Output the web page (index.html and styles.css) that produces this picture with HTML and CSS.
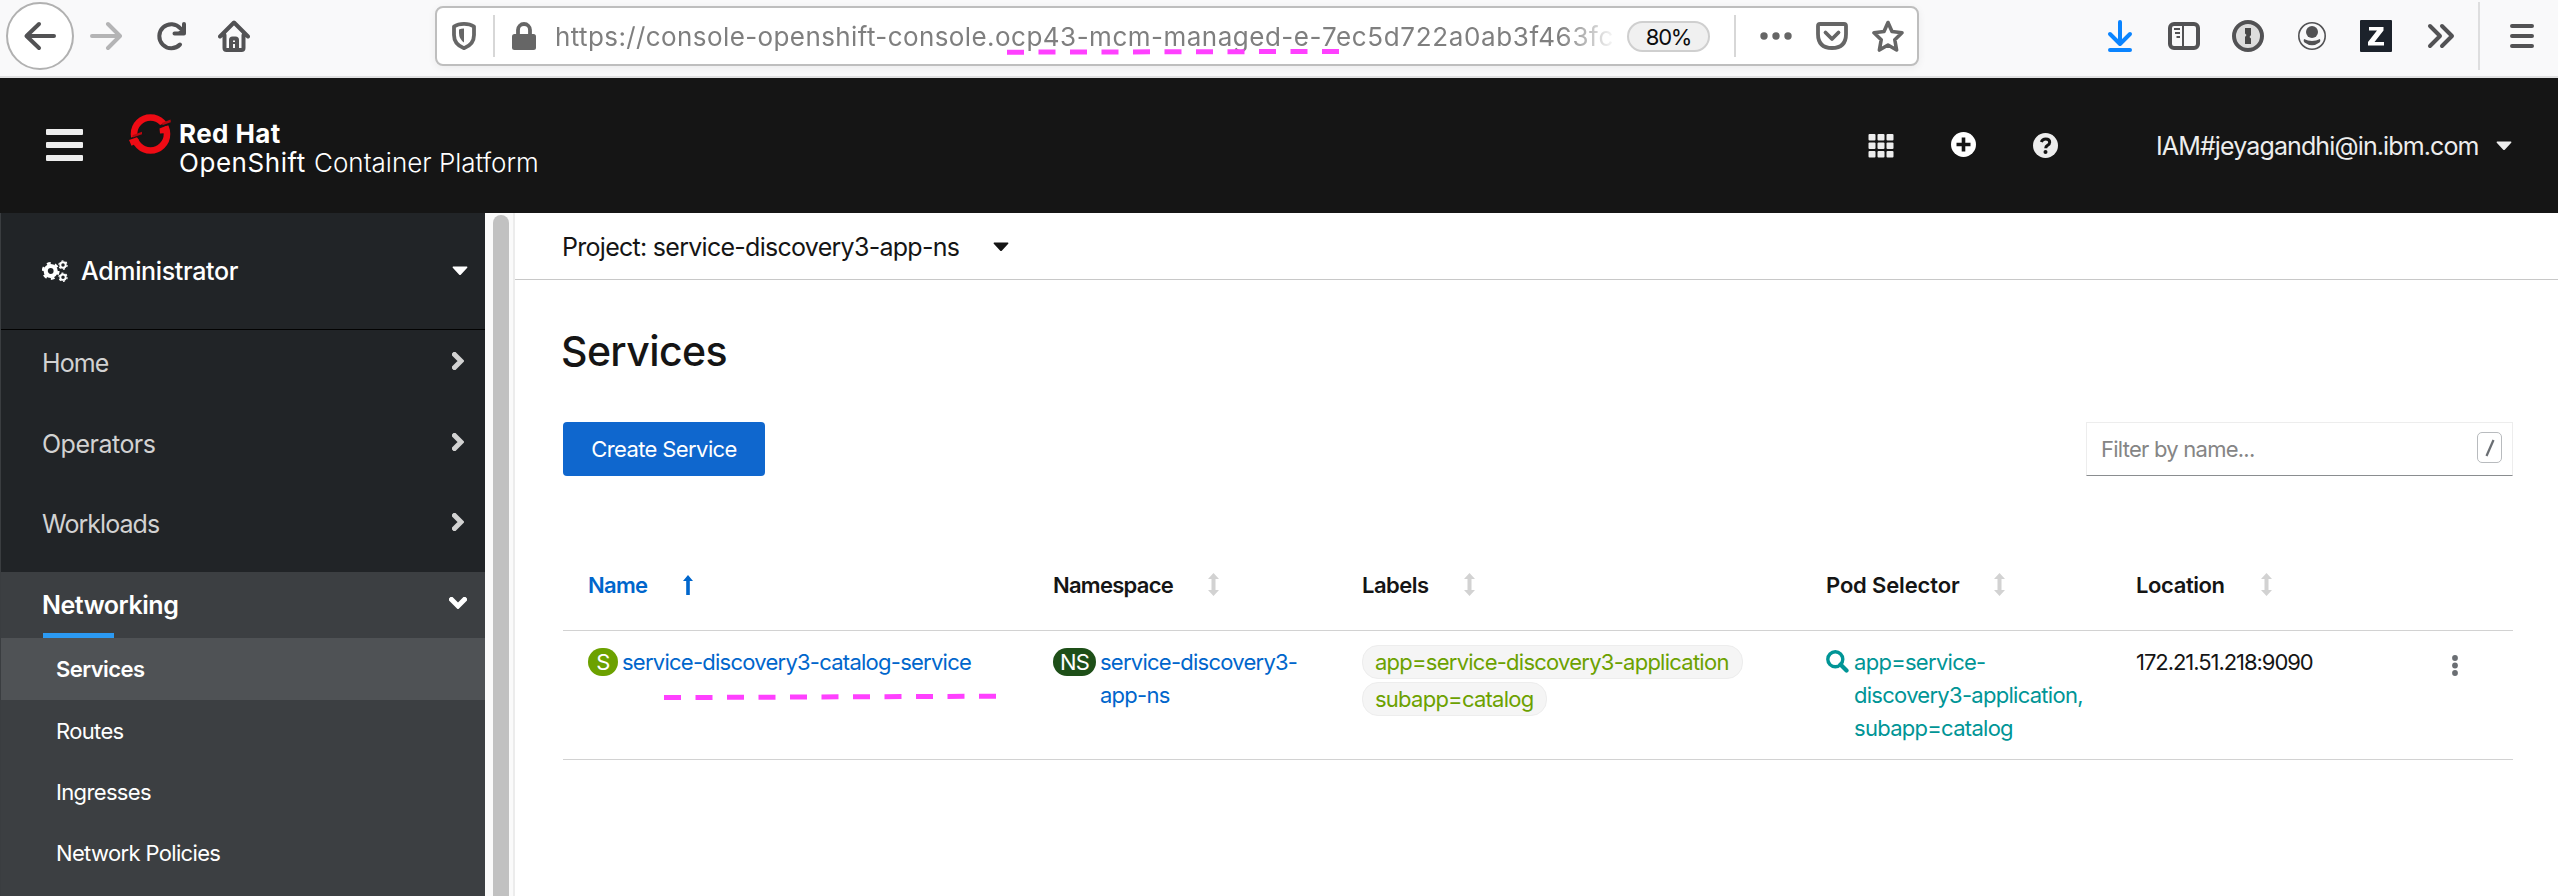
FILE: index.html
```html
<!DOCTYPE html>
<html lang="en">
<head>
<meta charset="utf-8">
<title>Services · Red Hat OpenShift Container Platform</title>
<link rel="stylesheet" href="styles.css">
</head>
<body>
<div class="toolbar">
  <div class="back"><svg width="34" height="32" viewBox="0 0 34 32" class="stroke"><path d="M16 4 3.500 16 16 28M4 16H31"/></svg></div>
  <svg class="forward stroke" width="32" height="32" viewBox="0 0 32 32"><path d="M18 4 30 16 18 28M2 16H29"/></svg>
  <svg class="reload stroke" width="32" height="32" viewBox="0 0 32 32"><path d="M25 24.500A12 12 0 1 1 25.500 8.500M29 4V13.500H19.500"/><path class="fill" d="M22 13 29 7V14H22Z" stroke="none"/></svg>
  <svg class="home stroke" width="32" height="32" viewBox="0 0 32 32"><path d="M2 16.500 16 2.500 30 16.500M6.500 15V28Q6.500 30 8.500 30H23.500Q25.500 30 25.500 28V15M13 29V20Q13 18.500 14.500 18.500H17.500Q19 18.500 19 20V29"/><rect class="fill" x="15" y="22" width="2" height="2" stroke="none"/></svg>
  <div class="urlbar">
    <svg width="32" height="32" viewBox="0 0 32 32"><path d="M16 3.800Q22 3.800 26 6.500V15Q26 24.500 16 28.200Q6 24.500 6 15V6.500Q10 3.800 16 3.800Z" fill="none" stroke="#666" stroke-width="3.800" stroke-linejoin="round"/><path d="M16 8.500V22.500Q11 19 11 13V9.500Q13 8.500 16 8.500Z" fill="#666"/></svg>
    <span class="sep"></span>
    <svg width="32" height="32" viewBox="0 0 32 32"><path d="M10 15V10a6 6 0 0 1 12 0V15" fill="none" stroke="#666" stroke-width="3.800"/><rect x="4" y="14" width="24" height="16" rx="2.500" fill="#666"/></svg>
    <div class="url"><span class="u1">https://console-openshift-console.</span><span class="u2">ocp43-mcm-managed-e-</span><span class="u3">7ec5d722a0ab3f463fc</span>
    </div>
    <span class="pill">80%</span>
    <span class="sep sep-b"></span>
    <svg width="32" height="32" viewBox="0 0 32 32" fill="#666"><circle cx="4" cy="16" r="3.700"/><circle cx="16" cy="16" r="3.700"/><circle cx="28" cy="16" r="3.700"/></svg>
    <svg width="32" height="32" viewBox="0 0 32 32" fill="none" stroke="#666" stroke-width="3.800" stroke-linecap="round" stroke-linejoin="round"><path d="M4 4H28Q30 4 30 6V14Q30 28 16 28T2 14V6Q2 4 4 4Z"/><path d="M9.500 12.500 16 19 22.500 12.500"/></svg>
    <svg width="32" height="32" viewBox="0 0 32 32" fill="none" stroke="#666" stroke-width="3.600" stroke-linejoin="round"><path d="M16 2.500 20 11.500 30 12.800 22.800 19.800 24.600 30 16 25 7.400 30 9.200 19.800 2 12.800 12 11.500Z"/></svg>
    <svg class="dash url-dash" width="334" height="6" viewBox="0 0 334 6"><path d="M0 3.200 334 2.400"/></svg>
  </div>
  <div class="tools">
    <svg width="32" height="32" viewBox="0 0 32 32" fill="none" stroke="#0a84ff" stroke-width="4" stroke-linecap="round" stroke-linejoin="round"><path d="M16 2V23M6 14 16 24 26 14M6 30H26"/></svg>
    <svg width="32" height="32" viewBox="0 0 32 32" fill="none" stroke="#525254"><rect x="2" y="4" width="28" height="24" rx="4" stroke-width="4"/><path d="M15 4V28M6 9H12M7 13H12M8.500 17H12" stroke-width="2"/></svg>
    <svg width="32" height="32" viewBox="0 0 32 32"><circle cx="16" cy="16" r="14" fill="#ddd" stroke="#525254" stroke-width="4"/><path d="M13 8H19V15L17.500 17 19 18.500V24H13V17L14.500 15 13 13.500Z" fill="#484848"/></svg>
    <svg width="32" height="32" viewBox="0 0 32 32" fill="#525254"><circle cx="16" cy="16" r="13.200" fill="none" stroke="#525254" stroke-width="1.600"/><circle cx="16" cy="12" r="6"/><path d="M8 19Q16 23 24 19Q25 21 23.500 22.500Q16 28 8.500 22.500Q7 21 8 19Z"/></svg>
    <svg width="32" height="32" viewBox="0 0 32 32"><rect width="32" height="32" rx="1" fill="#1c222b"/><path d="M9 7H23.500V10.500L14.500 22H24V25.500H8V22L17 10.500H9Z" fill="#fff"/></svg>
    <svg width="32" height="32" viewBox="0 0 32 32" class="stroke"><path d="M6 6 16 16 6 26M18 6 28 16 18 26"/></svg>
  </div>
  <span class="tool-sep"></span>
  <svg class="menu stroke" width="32" height="32" viewBox="0 0 32 32"><path d="M6 6H26M6 16H26M6 26H26"/></svg>
</div>

<header class="masthead">
  <div class="burger"><i></i><i></i><i></i></div>
  <div class="brand">
    <svg width="42" height="42" viewBox="0 0 42 42"><circle cx="21.500" cy="21" r="16.500" fill="none" stroke="#ee0b14" stroke-width="6.600"/><path d="M0 25.500 17 18.500V21.500L0 30ZM25 14.500 42 7.500V11L26.500 18Z" fill="#151515"/><path d="M3.500 22.200 13 18.800 13 21.200 3.800 24.500ZM33 10 41.500 6.500 41.800 9.200 33.500 12.300Z" fill="#b8070f"/><path d="M0 27 8 24.200 9.500 26.500 10 29.300 2.500 32.800ZM30.500 15.500 37.500 12.800 38.500 20 31 20.500Z" fill="#ee0b14"/></svg>
    <div class="brand-text"><div class="b1">Red Hat</div><div class="b2"><span class="os">OpenShift</span><span class="cp">Container Platform</span></div></div>
  </div>
  <div class="mast-tools">
    <svg width="26" height="24" viewBox="0 0 26 24" fill="#ededed"><rect x="0.500" width="7" height="6.500" rx="1"/><rect x="9.500" width="7" height="6.500" rx="1"/><rect x="18.500" width="7" height="6.500" rx="1"/><rect x="0.500" y="8.500" width="7" height="6.500" rx="1"/><rect x="9.500" y="8.500" width="7" height="6.500" rx="1"/><rect x="18.500" y="8.500" width="7" height="6.500" rx="1"/><rect x="0.500" y="17" width="7" height="6.500" rx="1"/><rect x="9.500" y="17" width="7" height="6.500" rx="1"/><rect x="18.500" y="17" width="7" height="6.500" rx="1"/></svg>
    <svg class="plus" width="25" height="25" viewBox="0 0 25 25"><circle cx="12.500" cy="12.500" r="12.500" fill="#fff"/><path d="M12.500 5.500V19.500M5.500 12.500H19.500" stroke="#151515" stroke-width="3.600"/></svg>
    <svg class="help" width="25" height="25" viewBox="0 0 25 25"><circle cx="12.500" cy="12.500" r="12.500" fill="#ededed"/><path d="M8.300 9Q9.500 6 12.700 6Q16.700 6 16.700 9.300Q16.700 11.200 14.500 12.300Q12.700 13.200 12.700 15.200" fill="none" stroke="#151515" stroke-width="3"/><circle cx="12.500" cy="19" r="2" fill="#151515"/></svg>
    <span class="user">IAM#jeyagandhi@in.ibm.com</span>
    <svg class="caret" width="16" height="10" viewBox="0 0 16 10"><path d="M1 .500H15Q16 1 15 2L9 8.500Q8 9.500 7 8.500L1 2Q0 1 1 .500Z"/></svg>
  </div>
</header>

<div class="page">
  <nav class="sidebar">
    <div class="perspective">
      <svg width="26" height="22" viewBox="0 0 26 22" fill="none" stroke="#fff"><circle cx="8.700" cy="11" r="5" stroke-width="4.200"/><circle cx="8.700" cy="11" r="7.700" stroke-width="2.400" stroke-dasharray="3.800 4.263"/><circle cx="21" cy="5" r="2.700" stroke-width="1.900"/><circle cx="21" cy="5" r="4.100" stroke-width="1.200" stroke-dasharray="2 2.300"/><circle cx="21" cy="17.200" r="2.700" stroke-width="1.900"/><circle cx="21" cy="17.200" r="4.100" stroke-width="1.200" stroke-dasharray="2 2.300"/></svg>
      <span class="admin">Administrator</span>
      <svg class="caret" width="16" height="10" viewBox="0 0 16 10"><path d="M1 .500H15Q16 1 15 2L9 8.500Q8 9.500 7 8.500L1 2Q0 1 1 .500Z"/></svg>
    </div>
    <div class="item"><span class="home-l">Home</span><svg class="chev" width="12" height="18" viewBox="0 0 12 18"><path d="M2.500 2.500 9 9 2.500 15.500"/></svg></div>
    <div class="item"><span class="oper-l">Operators</span><svg class="chev" width="12" height="18" viewBox="0 0 12 18"><path d="M2.500 2.500 9 9 2.500 15.500"/></svg></div>
    <div class="item"><span class="work-l">Workloads</span><svg class="chev" width="12" height="18" viewBox="0 0 12 18"><path d="M2.500 2.500 9 9 2.500 15.500"/></svg></div>
    <div class="group">
      <div class="item open"><span class="net-l">Networking</span><svg class="chev down" width="18" height="12" viewBox="0 0 18 12"><path d="M2.500 2.500 9 9 15.500 2.500"/></svg></div>
      <div class="sub active"><span>Services</span></div>
      <div class="sub">Routes</div>
      <div class="sub">Ingresses</div>
      <div class="sub">Network Policies</div>
    </div>
  </nav>
  <div class="gutter"><div class="thumb"></div></div>
  <main>
    <div class="project"><span>Project: service-discovery3-app-ns</span><svg class="caret" width="16" height="10" viewBox="0 0 16 10"><path d="M1 .500H15Q16 1 15 2L9 8.500Q8 9.500 7 8.500L1 2Q0 1 1 .500Z"/></svg></div>
    <div class="content">
      <h1>Services</h1>
      <div class="actions">
        <div class="create">Create Service</div>
        <div class="filter"><span>Filter by name...</span><b><svg width="10" height="18" viewBox="0 0 10 18"><path d="M8.500 1 1.500 17" stroke="#6a6e73" stroke-width="2.200"/></svg></b></div>
      </div>
      <div class="table">
        <div class="row head">
          <div class="name"><span class="h1t">Name</span><svg width="10" height="20" viewBox="0 0 10 20" fill="#0066cc"><path d="M5 0 10 6H6.800V20H3.200V6H0Z"/></svg></div>
          <div><span class="h2t">Namespace</span><svg class="sort" width="11" height="23" viewBox="0 0 11 23"><path d="M5.500 0 11 6H7.500V17H11L5.500 23 0 17H3.500V6H0Z"/></svg></div>
          <div><span class="h3t">Labels</span><svg class="sort" width="11" height="23" viewBox="0 0 11 23"><path d="M5.500 0 11 6H7.500V17H11L5.500 23 0 17H3.500V6H0Z"/></svg></div>
          <div><span class="h4t">Pod Selector</span><svg class="sort" width="11" height="23" viewBox="0 0 11 23"><path d="M5.500 0 11 6H7.500V17H11L5.500 23 0 17H3.500V6H0Z"/></svg></div>
          <div><span class="h5t">Location</span><svg class="sort" width="11" height="23" viewBox="0 0 11 23"><path d="M5.500 0 11 6H7.500V17H11L5.500 23 0 17H3.500V6H0Z"/></svg></div>
        </div>
        <div class="row body">
          <div class="cell"><span class="badge s">S</span><a class="link">service-discovery3-catalog-service</a></div>
          <div class="cell"><span class="badge ns">NS</span><a class="link">service-discovery3-<br>app-ns</a></div>
          <div class="labels"><span class="label">app=service-discovery3-application</span><span class="label">subapp=catalog</span></div>
          <div class="cell"><svg class="mag" width="23" height="23" viewBox="0 0 23 23" fill="none" stroke="#009596"><circle cx="9.300" cy="9.300" r="7.500" stroke-width="3.400"/><path d="M14.500 14.500 20.500 20.500" stroke-width="4.200" stroke-linecap="round"/></svg><a class="pod">app=service-<br>discovery3-application,<br>subapp=catalog</a></div>
          <div class="cell"><span class="loc">172.21.51.218:9090</span></div>
          <svg class="kebab" width="6" height="21" viewBox="0 0 6 21" fill="#6a6e73"><circle cx="3" cy="3" r="2.900"/><circle cx="3" cy="10.500" r="2.900"/><circle cx="3" cy="18" r="2.900"/></svg>
          <svg class="dash name-dash" width="334" height="8" viewBox="0 0 334 8"><path d="M0 4.600 334 3.200"/></svg>
        </div>
      </div>
    </div>
  </main>
</div>
</body>
</html>
```
FILE: styles.css
```css
* { box-sizing: border-box; }
body {
  margin: 0;
  width: 2558px;
  height: 896px;
  overflow: hidden;
  background: #fff;
  color: #151515;
  font-family: Inter, "Liberation Sans", sans-serif;
  font-size: 22px;
  white-space: nowrap;
}
svg { display: block; flex: none; }

/* Browser toolbar */
.toolbar {
  display: flex;
  align-items: center;
  height: 78px;
  padding: 0 18px 4px 6px;
  background: #f9f9fa;
  border-bottom: 2px solid #e0e0e1;
}
.stroke { fill: none; stroke: #525254; stroke-width: 4; stroke-linecap: round; stroke-linejoin: round; }
.stroke .fill { fill: #525254; }
.back {
  display: flex;
  align-items: center;
  justify-content: center;
  width: 68px;
  height: 68px;
  border: 2px solid #b1b1b1;
  border-radius: 50%;
  background: #fff;
}
.forward { margin-left: 16px; stroke: #b4b4b5; }
.reload { margin-left: 33px; }
.home { margin-left: 31px; }
.urlbar {
  position: relative;
  display: flex;
  align-items: center;
  width: 1484px;
  height: 60px;
  margin-left: 185px;
  padding-left: 11px;
  background: #fff;
  border: 2px solid #bebebe;
  border-radius: 8px;
  box-shadow: 0 2px 8px rgba(0, 0, 0, .06);
}
.sep { width: 2px; height: 42px; margin: 0 13px; background: #d7d7d7; }
.url {
  width: 1060px;
  margin: 2px 0 0 15px;
  overflow: hidden;
  color: #7f7f7f;
  font-size: 26px;
  line-height: 40px;
  mask-image: linear-gradient(90deg, #000 1005px, transparent 1062px);
}
.u1 { letter-spacing: .4px; }
.u2 { letter-spacing: .5px; }
.u3 { letter-spacing: .65px; }
.pill {
  width: 83px;
  height: 31px;
  margin-left: 12px;
  border: 2px solid #cfcfcf;
  border-radius: 16px;
  background: #f0f0f0;
  color: #0c0c0d;
  font-size: 22px;
  line-height: 28px;
  letter-spacing: -1.2px;
  text-align: center;
}
.sep-b { margin: 0 0 0 24px; }
.sep-b ~ svg { margin-left: 24px; }
.dash { position: absolute; fill: none; stroke: #ff40ff; stroke-width: 5; stroke-dasharray: 17 14.500; }
.urlbar .url-dash { left: 570px; top: 41px; margin: 0; }
.tools { display: flex; gap: 32px; margin-left: 185px; }
.tool-sep { width: 2px; height: 68px; margin: 0 26px 0 22px; background: #dededf; }

/* Masthead */
.masthead { display: flex; height: 135px; padding: 0 46px; background: #151515; color: #fff; }
.burger { display: flex; flex-direction: column; gap: 7px; width: 37px; padding-top: 51px; }
.burger i { height: 6px; border-radius: 1px; background: #ededed; }
.brand { display: flex; margin-left: 46px; padding-top: 35px; }
.brand-text { margin: 6px 0 0 8px; font-size: 26px; line-height: 29px; }
.b1 { font-weight: 700; letter-spacing: .4px; }
.b2 { display: flex; gap: 8px; }
.os { width: 127px; letter-spacing: .55px; }
.cp { font-weight: 300; letter-spacing: 0; }
.mast-tools { display: flex; align-items: center; margin-left: auto; }
.plus { margin: -2px 0 0 57px; }
.help { margin-left: 57px; }
.user { width: 340px; margin-left: 98px; color: #ededed; font-size: 25px; letter-spacing: -.88px; }
.caret { fill: currentColor; }
.masthead .caret { fill: #ededed; }

/* Shell */
.page { display: flex; height: 683px; }
.sidebar { width: 485px; background: #212427; color: #d2d2d2; font-size: 25px; border-left: 1px solid #3a3d40; }
.perspective {
  display: flex;
  align-items: center;
  height: 117px;
  padding: 0 17px 0 41px;
  border-bottom: 1px solid #030303;
  color: #fff;
}
.admin { margin-left: 13px; font-weight: 500; letter-spacing: -.35px; }
.perspective .caret, .chev { margin-left: auto; }
.item { display: flex; align-items: center; height: 66px; margin-bottom: 14.500px; padding: 0 21px 0 41px; }
.home-l { letter-spacing: -.9px; }
.oper-l { letter-spacing: -.5px; }
.work-l { letter-spacing: -.95px; }
.net-l { letter-spacing: -.45px; }
.chev { margin-bottom: 4px; fill: none; stroke: #d2d2d2; stroke-width: 5; stroke-linecap: square; }
.group { height: 325px; background: #3c3f42; color: #fff; }
.open {
  margin: 0;
  padding-right: 18px;
  font-weight: 600;
  background: linear-gradient(#2b9af3, #2b9af3) 42px 100% / 71px 5px no-repeat;
}
.down { stroke: #fff; }
.sub { height: 61.300px; padding-left: 55px; font-size: 22px; line-height: 62px; letter-spacing: -.65px; }
.active { height: 62px; background: #4f5255; font-weight: 600; letter-spacing: -.55px; }
.gutter {
  width: 30px;
  padding: 2px 4px 0 8px;
  overflow: hidden;
  background: #fafafa;
  border-right: 2px solid #ececec;
}
.thumb { width: 16px; height: 700px; border-radius: 8px; background: #c1c1c1; }

/* Main */
main { width: 2043px; }
.project {
  display: flex;
  align-items: center;
  height: 67px;
  padding-left: 47px;
  border-bottom: 1px solid #c8c8c8;
  font-size: 25px;
  letter-spacing: -.72px;
}
.project span { width: 431px; padding-top: 1px; }
.project .caret { margin-top: 2px; }
.content { padding: 40px 45px 0 48px; }
h1 { margin: 0 0 0 -2px; font-size: 41px; font-weight: 500; line-height: 62px; letter-spacing: -.6px; }
.actions { display: flex; justify-content: space-between; margin-top: 40px; }
.create {
  width: 202px;
  height: 54px;
  border-radius: 4px;
  background: #0f67ce;
  color: #fff;
  line-height: 54px;
  text-align: center;
  letter-spacing: -.6px;
}
.filter {
  display: flex;
  align-items: center;
  justify-content: space-between;
  width: 427px;
  height: 54px;
  padding: 0 10px 0 14px;
  border: 1px solid #ededed;
  border-bottom: 1px solid #8a8d90;
  color: #858585;
  letter-spacing: -.75px;
}
.filter b {
  display: flex;
  align-items: center;
  justify-content: center;
  width: 25px;
  height: 31px;
  margin-bottom: 3px;
  border: 1px solid #b8bbbe;
  border-radius: 5px;
}

/* Services table */
.table { margin-top: 64px; }
.row {
  position: relative;
  display: grid;
  grid-template-columns: 465px 309px 464px 310px 316px auto;
  padding-left: 25px;
  border-bottom: 1px solid #d2d2d2;
}
.head { height: 91px; font-weight: 600; }
.head > div { display: flex; align-items: center; height: 90px; }
.sort { margin-top: -2px; fill: #d2d2d2; }
.name { color: #0066cc; }
.h1t { width: 95px; letter-spacing: -.7px; }
.h2t { width: 155px; letter-spacing: -.74px; }
.h3t { width: 102px; letter-spacing: -.5px; }
.h4t { width: 168px; letter-spacing: -.15px; }
.h5t { width: 125px; letter-spacing: -.4px; }
.body { height: 129px; padding-top: 14px; line-height: 33px; letter-spacing: -.75px; }
.cell { display: flex; align-items: flex-start; }
.badge {
  height: 28px;
  margin: 3px 5px 0 0;
  border-radius: 14px;
  color: #fff;
  line-height: 28px;
  text-align: center;
}
.s { width: 30px; background: #6ca100; }
.ns { width: 43px; background: #1e4f18; }
.link { padding-top: 1px; margin-left: -1px; color: #0066cc; }
.labels { display: flex; flex-direction: column; align-items: flex-start; gap: 3px; }
.label {
  height: 34px;
  padding: 0 13px 0 12px;
  border: 1px solid #ededed;
  border-radius: 16px;
  background: #f5f5f5;
  color: #6ca100;
  line-height: 32px;
}
.mag { margin: 5px 5px 0 0; }
.pod { padding-top: 1px; color: #009596; letter-spacing: -.72px; }
.loc { padding-top: 1px; letter-spacing: -1.05px; }
.kebab { margin-top: 10px; }
.name-dash { left: 101px; top: 62px; }
```
